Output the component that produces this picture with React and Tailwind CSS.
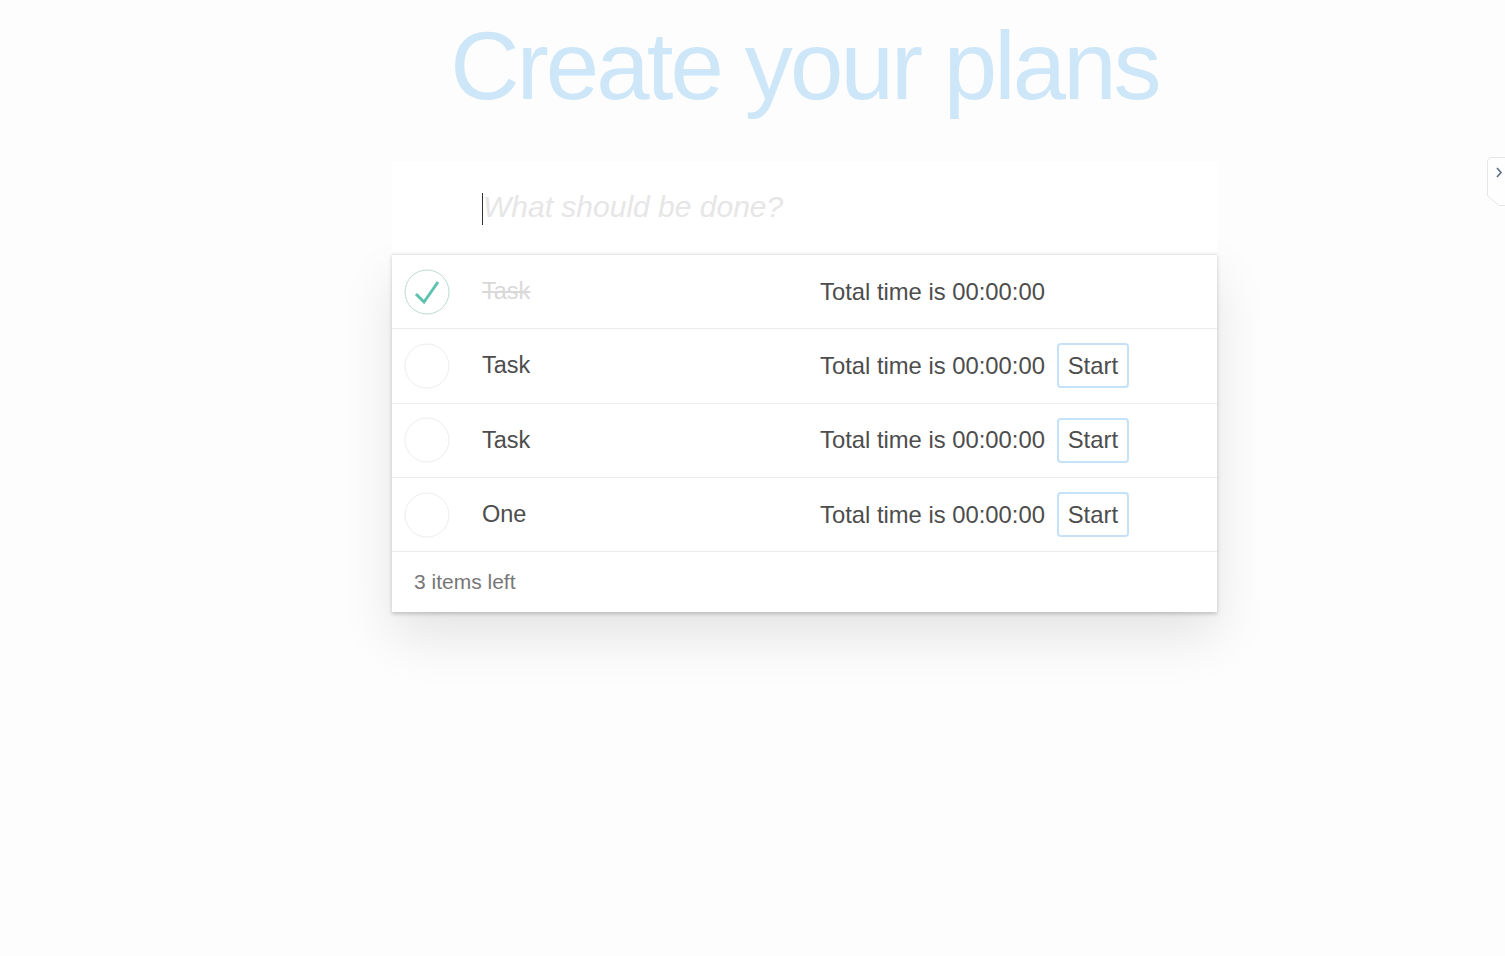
import React from 'react';

const todos = [
  { id: 1, title: 'Task', done: true },
  { id: 2, title: 'Task', done: false },
  { id: 3, title: 'Task', done: false },
  { id: 4, title: 'One', done: false },
];

const Toggle = ({ done }) => (
  <div className="w-[46px] h-[46px] shrink-0">
    <svg width="46" height="46" viewBox="0 0 46 46">
      <circle cx="23" cy="23" r="22" fill="none" stroke={done ? '#bddad5' : '#ededed'} strokeWidth="1" />
      {done && (
        <path d="M12 25 L20 33 L34 13" fill="none" stroke="#5dc2af" strokeWidth="3" strokeLinecap="butt" strokeLinejoin="miter" />
      )}
    </svg>
  </div>
);

const App = () => {
  const left = todos.filter((t) => !t.done).length;

  return (
    <div className="relative min-h-screen bg-[#fdfdfd] text-[#4d4d4d]" style={{ fontFamily: '"Liberation Sans", Arial, sans-serif' }}>
      <div className="pl-[104px] flex flex-col items-center">
        <h1 className="mt-[16px] h-[100px] text-[96px] leading-[100px] font-normal text-[#cde7f9] tracking-[-2.9px]">
          Create your plans
        </h1>

        <div className="mt-[46px] w-[825px]">
          <div className="relative h-[92px] bg-white shadow-[inset_0_-2px_1px_rgba(0,0,0,0.03)] flex items-center pl-[90px]">
            <span className="w-px h-[32px] bg-[#333] mt-[1px]"></span>
            <span className="italic text-[30px] text-[#e6e6e6] font-light -mt-[3px]">What should be done?</span>
          </div>

          <div className="bg-white border-t border-[#e6e6e6] shadow-[0_2px_4px_0_rgba(0,0,0,0.2),0_25px_50px_0_rgba(0,0,0,0.1)]">
            <ul>
              {todos.map((todo) => (
                <li key={todo.id} className="h-[74.3px] flex items-center border-b border-[#ededed]">
                  <div className="ml-3">
                    <Toggle done={todo.done} />
                  </div>
                  <span
                    className={
                      'ml-[32px] w-[338px] text-[23.5px] ' +
                      (todo.done ? 'line-through text-[#d9d9d9]' : 'text-[#4d4d4d]')
                    }
                  >
                    {todo.title}
                  </span>
                  <span className="text-[23.8px] text-[#4d4d4d]">Total time is 00:00:00</span>
                  {!todo.done && (
                    <button className="ml-[12px] w-[72px] h-[45px] border-2 border-[#c4e2f9] rounded-[4px] text-[23.8px] text-[#4d4d4d] bg-white">
                      Start
                    </button>
                  )}
                </li>
              ))}
            </ul>
            <footer className="h-[60px] flex items-center pl-[22px] text-[21px] text-[#777]">
              {left} items left
            </footer>
          </div>
        </div>
      </div>

      <div className="absolute right-0 top-[157px]">
        <svg width="18" height="49" viewBox="0 0 18 49">
          <path d="M18 0.5 H5 Q0.5 0.5 0.5 5 V39 L12 48.5 H18" fill="#fefefe" stroke="#e3e7ec" strokeWidth="1" />
          <path d="M10 11 L14 15.5 L10 20" fill="none" stroke="#5d6d82" strokeWidth="1.6" />
        </svg>
      </div>
    </div>
  );
};

export default App;
